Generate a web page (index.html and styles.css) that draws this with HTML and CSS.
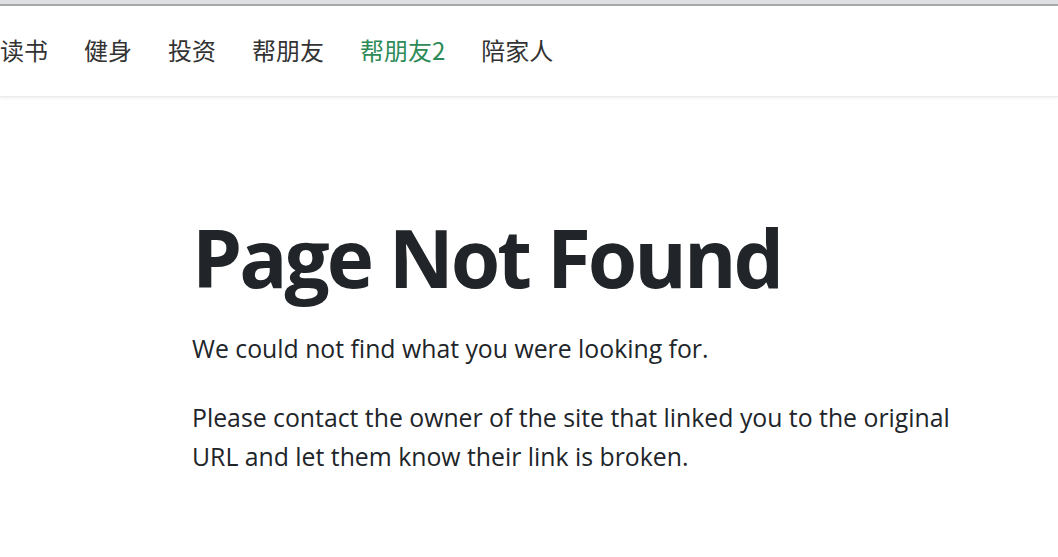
FILE: index.html
```html
<!DOCTYPE html>
<html lang="zh">
<head>
<meta charset="utf-8">
<title>Page Not Found</title>
<link rel="stylesheet" href="styles.css">
</head>
<body>
<div class="chrome"></div>
<header class="navbar">
  <nav class="nav">
    <a class="nav-link" href="#">读书</a>
    <a class="nav-link" href="#">健身</a>
    <a class="nav-link" href="#">投资</a>
    <a class="nav-link" href="#">帮朋友</a>
    <a class="nav-link active" href="#">帮朋友2</a>
    <a class="nav-link" href="#">陪家人</a>
  </nav>
</header>
<main class="content">
  <h1 class="title">Page Not Found</h1>
  <p class="text">We could not find what you were looking for.</p>
  <p class="text">Please contact the owner of the site that linked you to the original URL and let them know their link is broken.</p>
</main>
</body>
</html>
```

FILE: styles.css
```css
html, body {
  margin: 0;
  padding: 0;
  background: #fff;
}
body {
  font-family: "Open Sans", "Noto Sans CJK SC", sans-serif;
  color: #212529;
  overflow: hidden;
}
.chrome {
  height: 4px;
  background: #dee0e4;
  border-bottom: 2px solid #a9a9ab;
}
.navbar {
  height: 90px;
  display: flex;
  align-items: center;
  box-shadow: 0 1px 3px rgba(0,0,0,0.08);
  border-bottom: 1px solid #ececec;
}
.nav {
  display: flex;
  gap: 36px;
  padding-left: 0;
  margin-top: -3px;
}
.nav-link {
  font-family: "Noto Sans CJK SC", sans-serif;
  font-size: 24px;
  color: #333;
  text-decoration: none;
  line-height: 1;
}
.nav-link.active {
  color: #2e8b57;
}
.content {
  padding: 112px 0 0 192px;
  width: 790px;
}
.title {
  font-size: 80px;
  font-weight: 700;
  line-height: 96px;
  margin: 0 0 24px;
  letter-spacing: -3px;
}
.text {
  font-size: 24.8px;
  line-height: 39px;
  margin: 0 0 30px;
}
```
